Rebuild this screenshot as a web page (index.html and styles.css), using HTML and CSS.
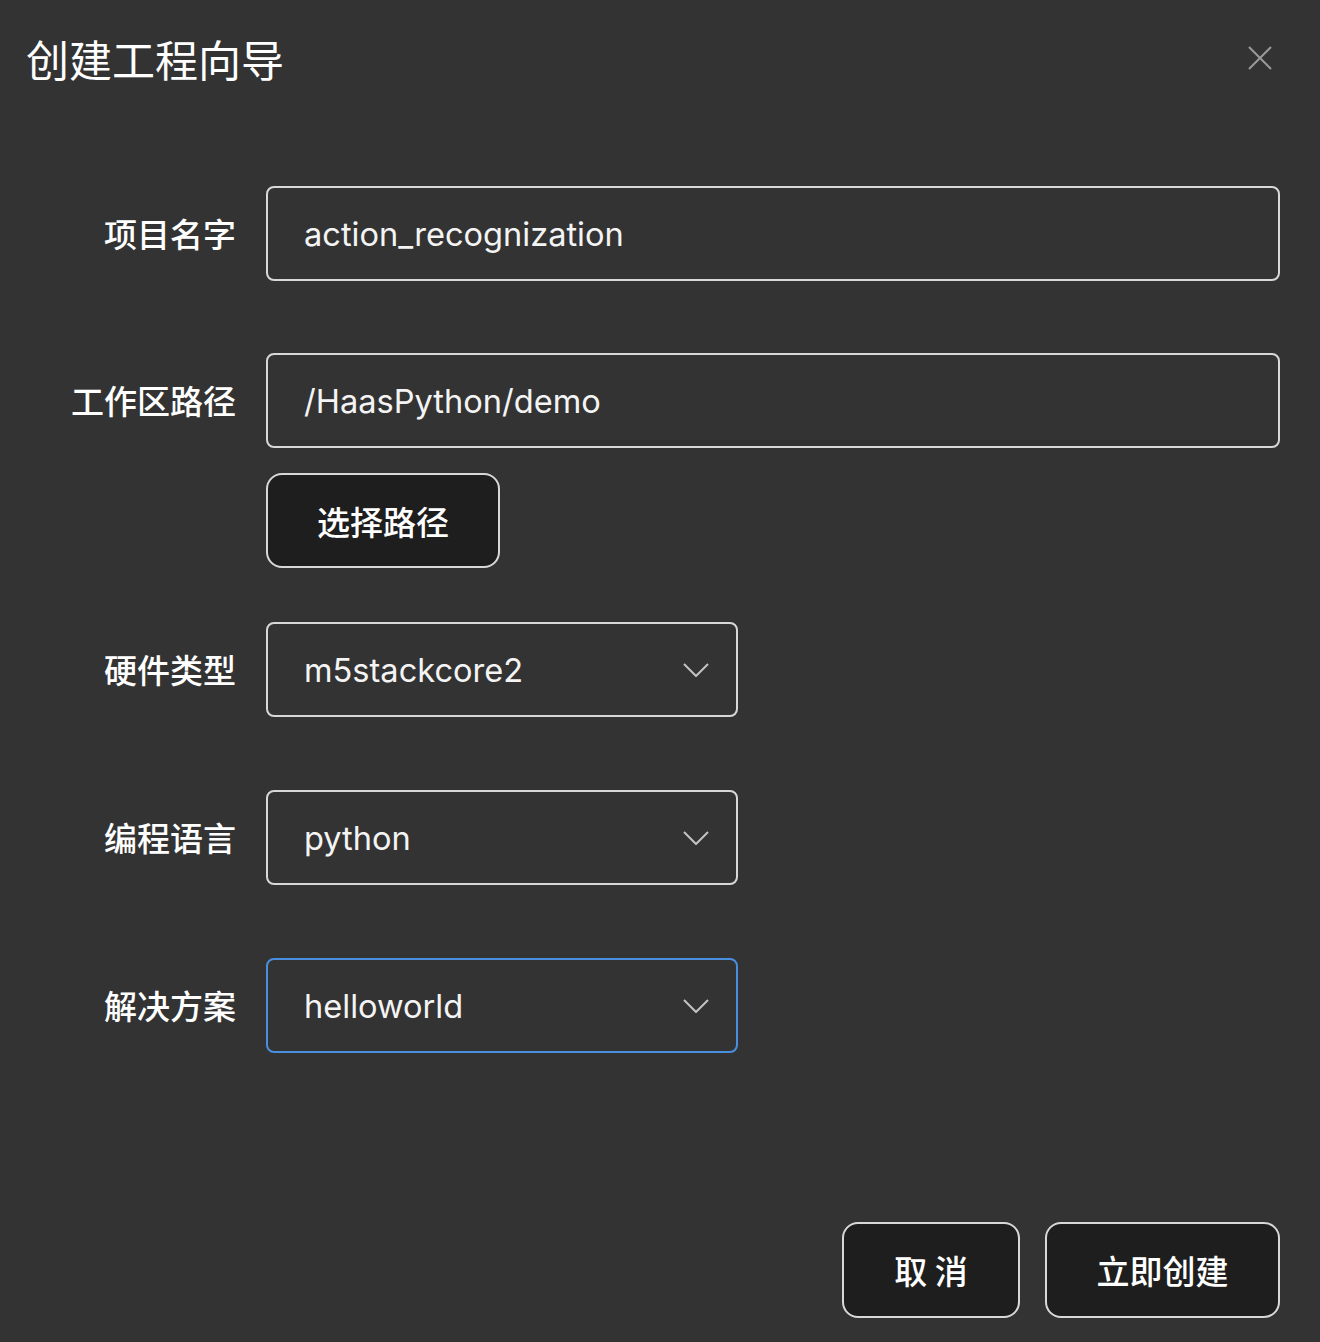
FILE: index.html
```html
<!DOCTYPE html>
<html lang="zh-CN">
<head>
<meta charset="utf-8">
<title>创建工程向导</title>
<link rel="stylesheet" href="styles.css">
</head>
<body>
<div class="dialog">
  <header class="header">
    <h1 class="title">创建工程向导</h1>
    <button class="close" aria-label="close">
      <svg width="24" height="24" viewBox="0 0 24 24"><path d="M1 1 L23 23 M23 1 L1 23" stroke="#9a9a9a" stroke-width="2" fill="none"/></svg>
    </button>
  </header>

  <div class="form">
    <div class="field">
      <label class="label">项目名字</label>
      <div class="control">
        <div class="input">action_recognization</div>
      </div>
    </div>

    <div class="field field--path">
      <label class="label">工作区路径</label>
      <div class="control control--stack">
        <div class="input">/HaasPython/demo</div>
        <button class="btn btn--path">选择路径</button>
      </div>
    </div>

    <div class="field">
      <label class="label">硬件类型</label>
      <div class="control">
        <div class="input select">m5stackcore2
          <svg class="arrow" width="26" height="14" viewBox="0 0 26 14"><path d="M1 1 L13 13 L25 1" stroke="#c4c4c4" stroke-width="2" fill="none"/></svg>
        </div>
      </div>
    </div>

    <div class="field">
      <label class="label">编程语言</label>
      <div class="control">
        <div class="input select">python
          <svg class="arrow" width="26" height="14" viewBox="0 0 26 14"><path d="M1 1 L13 13 L25 1" stroke="#c4c4c4" stroke-width="2" fill="none"/></svg>
        </div>
      </div>
    </div>

    <div class="field">
      <label class="label">解决方案</label>
      <div class="control">
        <div class="input select select--focus">helloworld
          <svg class="arrow" width="26" height="14" viewBox="0 0 26 14"><path d="M1 1 L13 13 L25 1" stroke="#c4c4c4" stroke-width="2" fill="none"/></svg>
        </div>
      </div>
    </div>
  </div>

  <footer class="footer">
    <button class="btn btn--cancel">取 消</button>
    <button class="btn btn--create">立即创建</button>
  </footer>
</div>
</body>
</html>
```

FILE: styles.css
```css
html, body {
  margin: 0;
  padding: 0;
  background: #333333;
}

body {
  font-family: "Inter", "Noto Sans CJK SC", sans-serif;
  color: #f2f2f2;
}

.dialog {
  box-sizing: border-box;
  height: 1342px;
  display: flex;
  flex-direction: column;
  padding: 0 40px 24px 26px;
}

.header {
  height: 116px;
  display: flex;
  align-items: center;
  justify-content: space-between;
}

.title {
  margin: 0;
  font-family: "Noto Sans CJK SC", sans-serif;
  font-size: 43px;
  font-weight: 400;
  color: #ffffff;
  line-height: 1;
}

.close {
  background: none;
  border: 0;
  padding: 0;
  margin-right: 8px;
  width: 24px;
  height: 24px;
  display: flex;
}

.form {
  margin-top: 70px;
  display: flex;
  flex-direction: column;
}

.field {
  display: flex;
  align-items: flex-start;
  margin-bottom: 73px;
}

.form .field:first-child {
  margin-bottom: 72px;
}

.form .field--path {
  margin-bottom: 54px;
}

.label {
  width: 210px;
  flex: none;
  margin-right: 30px;
  text-align: right;
  font-family: "Noto Sans CJK SC", sans-serif;
  font-size: 33px;
  font-weight: 500;
  line-height: 95px;
  color: #ffffff;
}

.control {
  flex: 1;
}

.control--stack {
  display: flex;
  flex-direction: column;
  align-items: flex-start;
  gap: 25px;
}

.input {
  box-sizing: border-box;
  width: 100%;
  height: 95px;
  border: 2px solid #d8d8d8;
  border-radius: 8px;
  padding: 0 27px 0 36px;
  display: flex;
  align-items: center;
  font-size: 32.6px;
  color: #f4f4f4;
}

.select {
  width: 472px;
  justify-content: space-between;
}

.select--focus {
  border-color: #4a8fdf;
}

.arrow {
  flex: none;
}

.btn {
  box-sizing: border-box;
  height: 95px;
  padding: 0;
  background: #1e1e1e;
  border: 2px solid #d8d8d8;
  border-radius: 16px;
  font-family: "Noto Sans CJK SC", sans-serif;
  font-size: 33px;
  font-weight: 500;
  color: #ffffff;
  white-space: pre;
}

.btn--path {
  width: 234px;
}

.footer {
  margin-top: auto;
  display: flex;
  justify-content: flex-end;
  gap: 25px;
}

.footer .btn {
  height: 96px;
}

.btn--cancel {
  width: 178px;
}

.btn--create {
  width: 235px;
}
```
